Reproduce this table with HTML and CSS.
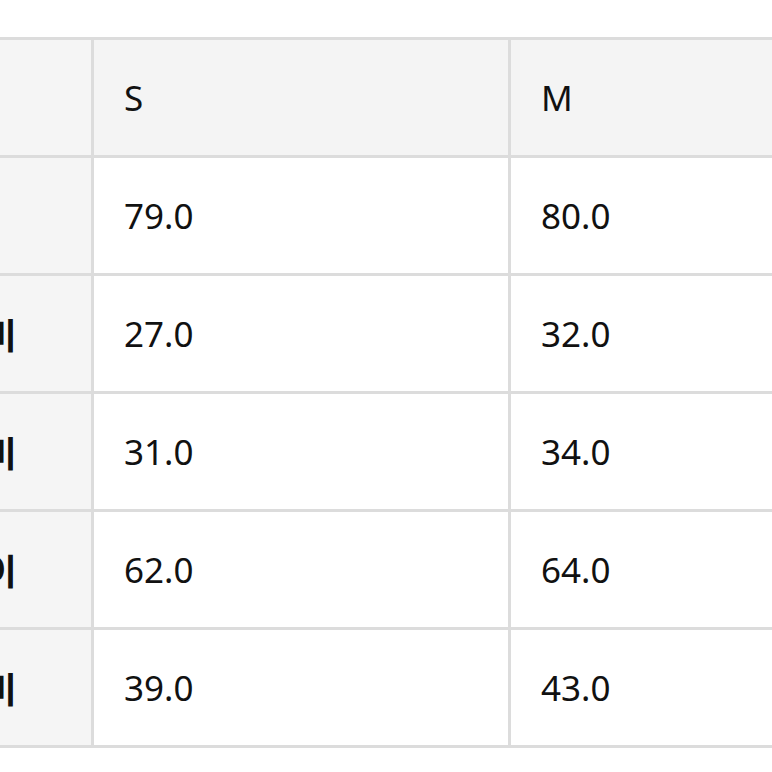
FILE: index.html
```html
<!DOCTYPE html>
<html lang="ko">
<head>
<meta charset="utf-8">
<link rel="stylesheet" href="styles.css">
</head>
<body>
<div class="viewport">
  <table class="size-table">
    <colgroup>
      <col class="col-label">
      <col class="col-size">
      <col class="col-size">
    </colgroup>
    <thead>
      <tr>
        <th class="label"></th>
        <th>S</th>
        <th>M</th>
      </tr>
    </thead>
    <tbody>
      <tr><th class="label">총장</th><td>79.0</td><td>80.0</td></tr>
      <tr><th class="label">어깨너비</th><td>27.0</td><td>32.0</td></tr>
      <tr><th class="label">가슴너비</th><td>31.0</td><td>34.0</td></tr>
      <tr><th class="label">소매길이</th><td>62.0</td><td>64.0</td></tr>
      <tr><th class="label">밑단너비</th><td>39.0</td><td>43.0</td></tr>
    </tbody>
  </table>
</div>
</body>
</html>
```

FILE: styles.css
```css
html, body {
  margin: 0;
  padding: 0;
  background: #ffffff;
}

.viewport {
  width: 772px;
  height: 772px;
  overflow: hidden;
  padding-top: 37px;
  box-sizing: border-box;
}

.size-table {
  border-collapse: collapse;
  margin-left: -162px;
  width: 1087px;
  table-layout: fixed;
  font-family: "Noto Sans", "Noto Sans CJK KR", sans-serif;
  font-size: 35px;
  color: #111111;
}

.col-label {
  width: 253px;
}

.col-size {
  width: 417px;
}

.size-table th,
.size-table td {
  border: 3px solid #dcdcdc;
  height: 115px;
  padding: 0 0 0 30px;
  text-align: left;
  font-weight: 400;
  vertical-align: middle;
  white-space: nowrap;
  overflow: hidden;
}

.size-table thead th {
  background: #f4f4f4;
}

.size-table th.label {
  padding-left: 47px;
  background: #f5f5f5;
  font-family: "Noto Sans CJK KR", sans-serif;
  font-weight: 700;
}

.size-table td {
  background: #ffffff;
}
```
